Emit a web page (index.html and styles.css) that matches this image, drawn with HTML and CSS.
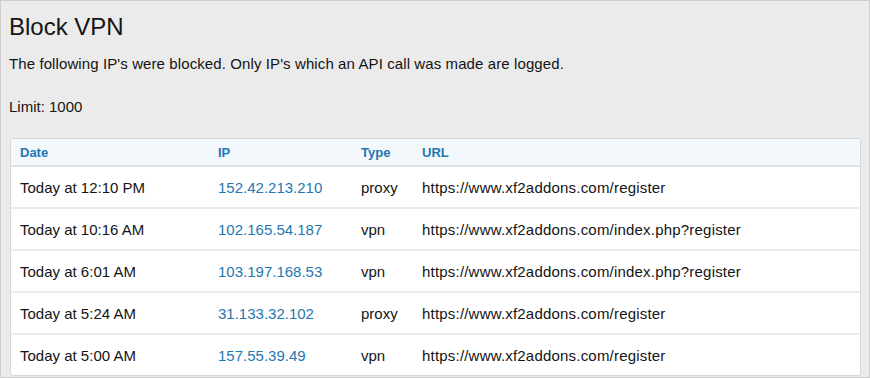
FILE: index.html
```html
<!DOCTYPE html>
<html lang="en">
<head>
    <meta charset="UTF-8">
    <title>Block VPN</title>
    <link rel="stylesheet" href="styles.css">
</head>
<body>
    <div class="page">
        <h1 class="page-title">Block VPN</h1>
        <p class="intro">The following IP's were blocked. Only IP's which an API call was made are logged.</p>
        <p class="limit">Limit: 1000</p>

        <div class="data-list">
            <table class="data-table">
                <thead>
                    <tr>
                        <th class="col-date">Date</th>
                        <th class="col-ip">IP</th>
                        <th class="col-type">Type</th>
                        <th class="col-url">URL</th>
                    </tr>
                </thead>
                <tbody>
                    <tr>
                        <td>Today at 12:10 PM</td>
                        <td><a class="ip-link" href="#">152.42.213.210</a></td>
                        <td>proxy</td>
                        <td>https://www.xf2addons.com/register</td>
                    </tr>
                    <tr>
                        <td>Today at 10:16 AM</td>
                        <td><a class="ip-link" href="#">102.165.54.187</a></td>
                        <td>vpn</td>
                        <td>https://www.xf2addons.com/index.php?register</td>
                    </tr>
                    <tr>
                        <td>Today at 6:01 AM</td>
                        <td><a class="ip-link" href="#">103.197.168.53</a></td>
                        <td>vpn</td>
                        <td>https://www.xf2addons.com/index.php?register</td>
                    </tr>
                    <tr>
                        <td>Today at 5:24 AM</td>
                        <td><a class="ip-link" href="#">31.133.32.102</a></td>
                        <td>proxy</td>
                        <td>https://www.xf2addons.com/register</td>
                    </tr>
                    <tr>
                        <td>Today at 5:00 AM</td>
                        <td><a class="ip-link" href="#">157.55.39.49</a></td>
                        <td>vpn</td>
                        <td>https://www.xf2addons.com/register</td>
                    </tr>
                </tbody>
            </table>
        </div>
    </div>
</body>
</html>
```

FILE: styles.css
```css
html, body {
    margin: 0;
    padding: 0;
}

body {
    font-family: "Liberation Sans", Arial, Helvetica, sans-serif;
    color: #141414;
    background-color: #ebebeb;
}

.page {
    box-sizing: border-box;
    height: 378px;
    overflow: hidden;
    border: 1px solid #cdcdcd;
    padding: 11px 8px 0 8px;
    background-color: #ebebeb;
}

.page-title {
    margin: 0;
    font-size: 24px;
    font-weight: 400;
    line-height: 30px;
}

.intro {
    margin: 12px 0 0;
    font-size: 15px;
    line-height: 20px;
    letter-spacing: 0.1px;
}

.limit {
    margin: 23px 0 0;
    font-size: 15px;
    line-height: 20px;
}

.data-list {
    margin: 21px 0 0 1px;
    background-color: white;
    border: 1px solid #d8d8d8;
    border-radius: 3px;
    overflow: hidden;
}

.data-table {
    width: 100%;
    border-collapse: collapse;
    table-layout: fixed;
}

.data-table th {
    height: 26px;
    padding: 0 9px;
    text-align: left;
    font-size: 13px;
    font-weight: 700;
    color: #2577b1;
    background-color: #f3f8fc;
    border-bottom: 2px solid #dfe3e7;
}

.data-table td {
    height: 40px;
    padding: 0 9px;
    font-size: 15px;
    border-top: 2px solid #ececec;
}

.data-table tbody tr:first-child td {
    border-top: none;
    height: 40px;
}

.data-table td:last-child {
    letter-spacing: 0.2px;
}

.col-date {
    width: 180px;
}

.col-ip {
    width: 125px;
}

.col-type {
    width: 43px;
}

.ip-link {
    color: #2577b1;
    text-decoration: none;
}
```
